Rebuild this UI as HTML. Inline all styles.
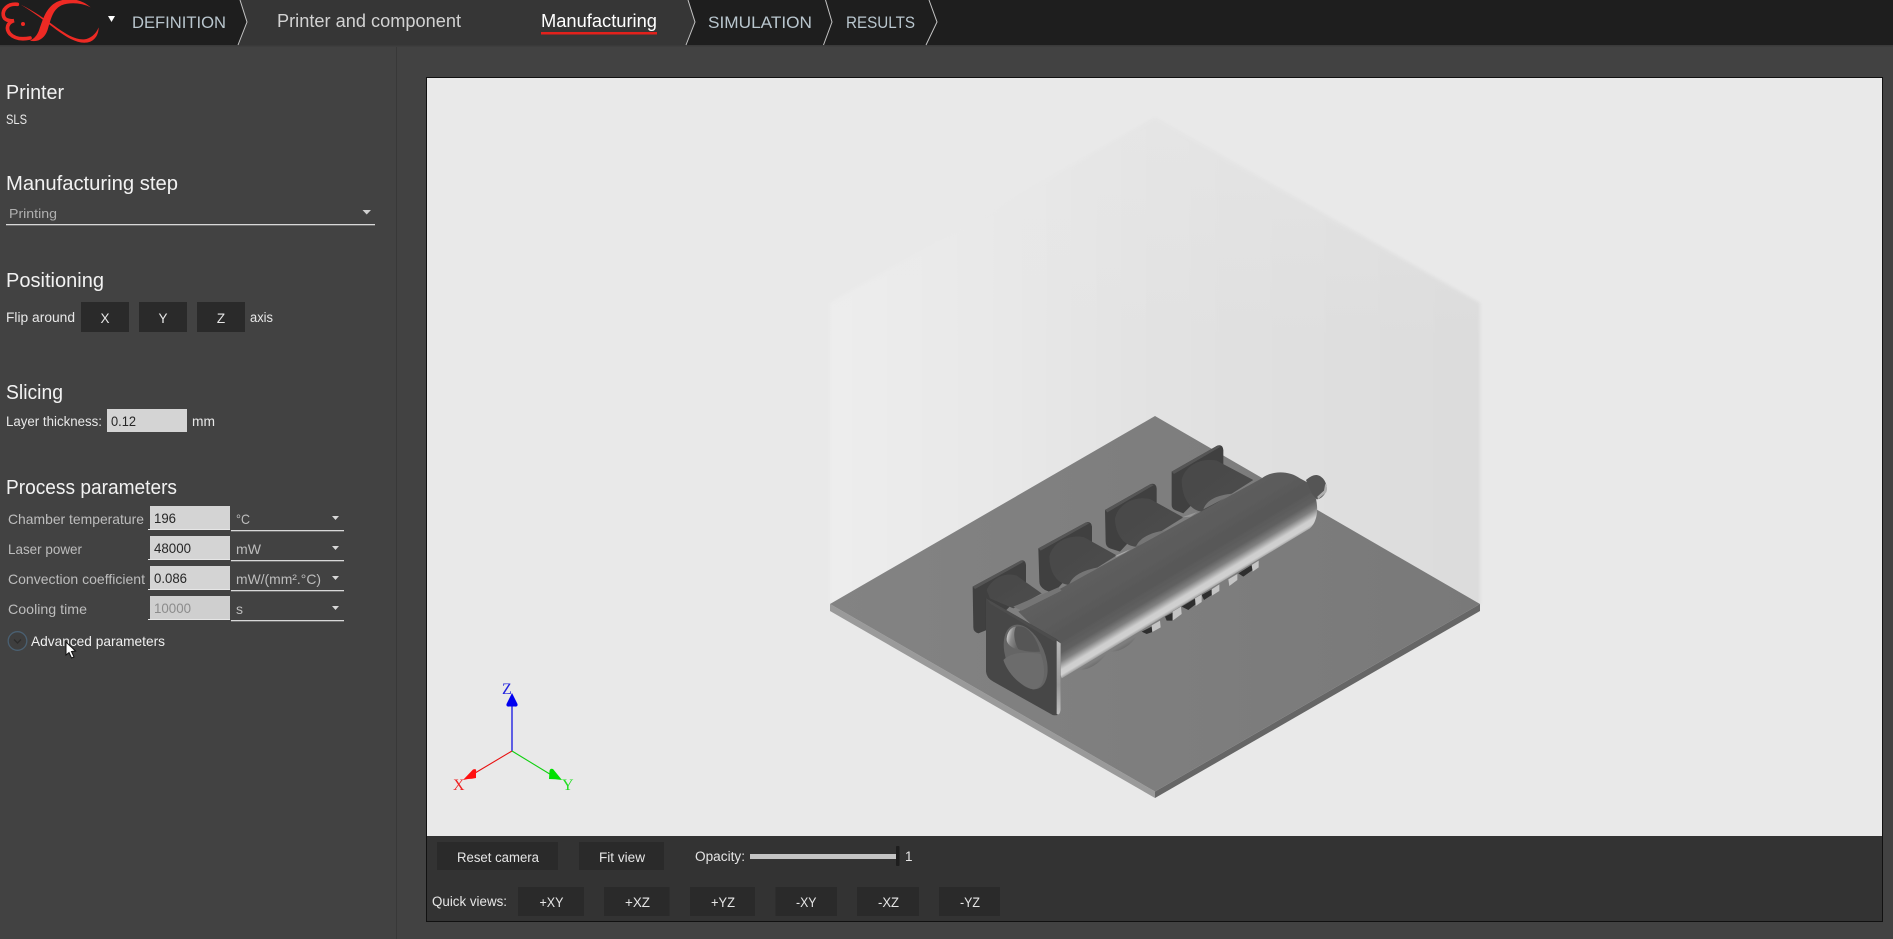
<!DOCTYPE html>
<html lang="en">
<head>
<meta charset="utf-8">
<title>Manufacturing</title>
<style>
html,body{margin:0;padding:0;background:#424242;width:1893px;height:939px;overflow:hidden}
svg{display:block}
text{font-family:"Liberation Sans",sans-serif}
.h{font-size:20px;fill:#f2f2f2}
.l{font-size:14px;fill:#bdbdbd}
.w{font-size:13.5px;fill:#e8e8e8}
.n{font-size:17px;fill:#b9c6ce}
.v{font-size:14px;fill:#262626}
.b{font-size:13.5px;fill:#e6e6e6}
.c{text-anchor:middle}
</style>
</head>
<body>
<svg width="1893" height="939" viewBox="0 0 1893 939" xmlns="http://www.w3.org/2000/svg">
<defs>
<linearGradient id="wall" gradientUnits="userSpaceOnUse" x1="830" y1="0" x2="1480" y2="0"><stop offset="0" stop-color="#ededed"/><stop offset=".27" stop-color="#e8e8e8"/><stop offset=".5" stop-color="#e2e2e2"/><stop offset=".75" stop-color="#dfdfdf"/><stop offset="1" stop-color="#dcdcdc"/></linearGradient>
<linearGradient id="fade" gradientUnits="userSpaceOnUse" x1="0" y1="118" x2="0" y2="340"><stop offset="0" stop-color="#e9e9e9" stop-opacity=".45"/><stop offset="1" stop-color="#e9e9e9" stop-opacity="0"/></linearGradient>
<linearGradient id="pt" gradientUnits="userSpaceOnUse" x1="830" y1="0" x2="1480" y2="0"><stop offset="0" stop-color="#838383"/><stop offset="1" stop-color="#797979"/></linearGradient>
<linearGradient id="tube" gradientUnits="userSpaceOnUse" x1="560" y1="351" x2="674" y2="541"><stop offset="0" stop-color="#5e5e5e"/><stop offset=".55" stop-color="#585858"/><stop offset=".7" stop-color="#606060"/><stop offset=".8" stop-color="#808080"/><stop offset=".9" stop-color="#cfcfcf"/><stop offset=".96" stop-color="#d0d0d0"/><stop offset="1" stop-color="#a0a0a0"/></linearGradient>
<linearGradient id="cyl" x1="0" y1="0" x2="1" y2="1"><stop offset="0" stop-color="#474747"/><stop offset="1" stop-color="#4e4e4e"/></linearGradient>
<linearGradient id="edge" x1="0" y1="0" x2="0" y2="1"><stop offset="0" stop-color="#b8b8b8"/><stop offset=".6" stop-color="#989898"/><stop offset="1" stop-color="#c0c0c0"/></linearGradient>
<linearGradient id="cres" x1="0" y1="0" x2="1" y2=".5"><stop offset="0" stop-color="#f0f0f0"/><stop offset=".5" stop-color="#8a8a8a"/><stop offset="1" stop-color="#666"/></linearGradient>
<linearGradient id="lump" x1="0" y1="0" x2="1" y2="1"><stop offset="0" stop-color="#bbb"/><stop offset="1" stop-color="#444"/></linearGradient>
<filter id="soft" x="-5%" y="-5%" width="110%" height="110%"><feGaussianBlur stdDeviation=".6"/></filter>
<filter id="soft2" x="-5%" y="-5%" width="110%" height="110%"><feGaussianBlur stdDeviation="1.5"/></filter>
</defs>

<!-- page -->
<rect width="1893" height="939" fill="#424242"/>
<rect x="396" y="47" width="1" height="892" fill="#383838"/>

<!-- top bar -->
<rect width="1893" height="45" fill="#1e1e1e"/>
<rect y="45" width="1893" height="1.5" fill="#3a3a3a"/>
<polygon points="240,0 688,0 695,22 686,45 238,45 247,22" fill="#363636"/>
<path d="M240,0 L247,22 L238,45 M688,0 L695,22 L686,45 M825.5,0 L832,22 L823.5,45 M929,0 L937,22 L926,45" fill="none" stroke="#c4c4c4" stroke-width="1"/>

<!-- logo -->
<g transform="scale(.3333)">
<path d="M52,13 C22,10 7,30 10,46 C12,60 28,64 42,62 C22,68 16,86 30,102 C46,118 70,118 90,114" fill="none" stroke="#ee2a24" stroke-width="11" stroke-linecap="round"/>
<circle cx="69" cy="72" r="6" fill="#ee2a24"/>
<path d="M272,22 C240,-6 200,-8 170,6 C136,24 128,62 118,88 C112,106 102,116 90,122 C116,128 134,114 142,92 C152,62 156,30 184,16 C210,6 244,8 272,22 Z" fill="#ee2a24"/>
<path d="M62,14 C100,36 135,64 170,90 C200,112 230,130 258,128 C282,126 296,106 296,82 C288,102 272,116 252,118 C226,120 198,102 172,84 C136,58 100,32 62,14 Z" fill="#ee2a24"/>
</g>
<polygon points="108,16 115,16 111.5,22" fill="#fff"/>

<!-- nav -->
<text class="n" x="132" y="28" textLength="94" lengthAdjust="spacingAndGlyphs">DEFINITION</text>
<text x="277" y="27" font-size="18" fill="#d2d2d2" textLength="184" lengthAdjust="spacingAndGlyphs">Printer and component</text>
<text x="541" y="27" font-size="18" fill="#fff" textLength="116" lengthAdjust="spacingAndGlyphs">Manufacturing</text>
<rect x="541" y="32" width="116" height="2.5" fill="#e3211c"/>
<text class="n" x="708" y="28" textLength="104" lengthAdjust="spacingAndGlyphs">SIMULATION</text>
<text class="n" x="846" y="28" textLength="69" lengthAdjust="spacingAndGlyphs">RESULTS</text>

<!-- left panel -->
<text class="h" x="6" y="99" textLength="58" lengthAdjust="spacingAndGlyphs">Printer</text>
<text class="w" x="6" y="124" textLength="21" lengthAdjust="spacingAndGlyphs">SLS</text>
<text class="h" x="6" y="190" textLength="172" lengthAdjust="spacingAndGlyphs">Manufacturing step</text>
<text x="9" y="218" font-size="13" fill="#b0b0b0" textLength="48" lengthAdjust="spacingAndGlyphs">Printing</text>
<polygon points="362.5,210 371,210 366.7,214.5" fill="#d0d0d0"/>
<rect x="6" y="224" width="369" height="1.3" fill="#d8d8d8"/>
<text class="h" x="6" y="287" textLength="98" lengthAdjust="spacingAndGlyphs">Positioning</text>
<text class="w" x="6" y="322" textLength="69" lengthAdjust="spacingAndGlyphs">Flip around</text>
<rect x="81" y="302" width="48" height="30" fill="#2a2a2a"/>
<rect x="139" y="302" width="48" height="30" fill="#2a2a2a"/>
<rect x="197" y="302" width="48" height="30" fill="#2a2a2a"/>
<text class="b c" x="105" y="323">X</text>
<text class="b c" x="163" y="323">Y</text>
<text class="b c" x="221" y="323">Z</text>
<text class="w" x="250" y="322" textLength="23" lengthAdjust="spacingAndGlyphs">axis</text>
<text class="h" x="6" y="399" textLength="57" lengthAdjust="spacingAndGlyphs">Slicing</text>
<text class="w" x="6" y="426" textLength="96" lengthAdjust="spacingAndGlyphs">Layer thickness:</text>
<rect x="107" y="409" width="80" height="23" fill="#d4d4d4"/>
<text class="v" x="111" y="426" textLength="25" lengthAdjust="spacingAndGlyphs">0.12</text>
<text class="w" x="192" y="426" textLength="23" lengthAdjust="spacingAndGlyphs">mm</text>

<text class="h" x="6" y="494" textLength="171" lengthAdjust="spacingAndGlyphs">Process parameters</text>

<text class="l" x="8" y="524" textLength="136" lengthAdjust="spacingAndGlyphs">Chamber temperature</text>
<rect x="150" y="506" width="80" height="23" fill="#d4d4d4"/><rect x="148" y="529" width="82" height="1" fill="#e6e6e6"/>
<text class="v" x="154" y="523" textLength="22" lengthAdjust="spacingAndGlyphs">196</text>
<text class="l" x="236" y="524" textLength="14" lengthAdjust="spacingAndGlyphs">°C</text>
<polygon points="332,516 339,516 335.5,520" fill="#d8d8d8"/>
<rect x="231" y="530" width="113" height="1.3" fill="#d8d8d8"/>

<text class="l" x="8" y="554" textLength="74" lengthAdjust="spacingAndGlyphs">Laser power</text>
<rect x="150" y="536" width="80" height="23" fill="#d4d4d4"/><rect x="148" y="559" width="82" height="1" fill="#e6e6e6"/>
<text class="v" x="154" y="553" textLength="37" lengthAdjust="spacingAndGlyphs">48000</text>
<text class="l" x="236" y="554" textLength="25" lengthAdjust="spacingAndGlyphs">mW</text>
<polygon points="332,546 339,546 335.5,550" fill="#d8d8d8"/>
<rect x="231" y="560" width="113" height="1.3" fill="#d8d8d8"/>

<text class="l" x="8" y="584" textLength="137" lengthAdjust="spacingAndGlyphs">Convection coefficient</text>
<rect x="150" y="566" width="80" height="23" fill="#d4d4d4"/><rect x="148" y="589" width="82" height="1" fill="#e6e6e6"/>
<text class="v" x="154" y="583" textLength="33" lengthAdjust="spacingAndGlyphs">0.086</text>
<text class="l" x="236" y="584" textLength="85" lengthAdjust="spacingAndGlyphs">mW/(mm².°C)</text>
<polygon points="332,576 339,576 335.5,580" fill="#d8d8d8"/>
<rect x="231" y="590" width="113" height="1.3" fill="#d8d8d8"/>

<text class="l" x="8" y="614" textLength="79" lengthAdjust="spacingAndGlyphs">Cooling time</text>
<rect x="150" y="596" width="80" height="23" fill="#cfcfcf"/><rect x="148" y="619" width="82" height="1" fill="#e6e6e6"/>
<text x="154" y="613" font-size="14" fill="#8c8c8c" textLength="37" lengthAdjust="spacingAndGlyphs">10000</text>
<text class="l" x="236" y="614" textLength="7" lengthAdjust="spacingAndGlyphs">s</text>
<polygon points="332,606 339,606 335.5,610" fill="#d8d8d8"/>
<rect x="231" y="620" width="113" height="1.3" fill="#d8d8d8"/>

<circle cx="17.5" cy="641" r="9.3" fill="#3e3e3e" stroke="#4a6072" stroke-width="1.3"/>
<path d="M14,639.5 L17.5,643 L21,639.5" fill="none" stroke="#2c2c2c" stroke-width="1.4"/>
<text x="31" y="646" font-size="14" fill="#f0f0f0" textLength="134" lengthAdjust="spacingAndGlyphs">Advanced parameters</text>
<path d="M66,642 L66,655 L69,652.5 L71.5,658 L74,657 L71.5,651.5 L75.5,651 Z" fill="#fff" stroke="#111" stroke-width="1"/>

<!-- viewport -->
<rect x="426.5" y="77.5" width="1456" height="844" fill="#333" stroke="#111" stroke-width="1"/>
<rect x="427" y="78" width="1455" height="758" fill="#e9e9e9"/>

<!-- build volume -->
<polygon points="830,303 1155,118 1480,303 1480,604 1155,791 830,604" fill="url(#wall)" filter="url(#soft2)"/>
<polygon points="830,303 1155,118 1480,303 1480,340 830,340" fill="url(#fade)"/>

<!-- plate -->
<polygon points="830,604 830,611 1155,798 1155,791.5" fill="#9a9a9a"/>
<polygon points="1155,791.5 1155,798 1480,611 1480,604" fill="#666"/>
<polygon points="1155,416 830,604 1155,791.5 1480,604" fill="url(#pt)"/>

<!-- model, in 3x coordinates -->
<g transform="translate(950 430) scale(.33333)" filter="url(#soft)">
<!-- rear flanges -->
<path d="M665,125 L802,47 Q818,42 820,60 L820,130 L700,250 L675,240 Q665,235 665,225 Z" fill="#3f3f3f"/>
<path d="M665,125 L802,47 L812,50 L672,132 Z" fill="#555"/>
<path d="M465,240 L602,162 Q618,158 620,175 L620,245 L510,365 L480,355 Q467,350 467,335 Z" fill="#3f3f3f"/>
<path d="M465,240 L602,162 L612,165 L472,247 Z" fill="#555"/>
<path d="M265,355 L408,277 Q424,273 426,290 L426,360 L310,490 L285,480 Q268,470 268,455 Z" fill="#3f3f3f"/>
<path d="M265,355 L408,277 L418,280 L272,362 Z" fill="#555"/>
<path d="M68,470 L212,392 Q226,388 228,405 L228,480 L110,600 L85,610 Q70,606 70,592 Z" fill="#3f3f3f"/>
<path d="M68,470 L212,392 L222,395 L75,477 Z" fill="#555"/>

<!-- cylinders -->
<path d="M695,150 C705,105 755,82 800,92 L910,150 L760,245 C720,245 695,200 695,150 Z" fill="url(#cyl)"/>
<path d="M495,265 C505,220 555,197 600,207 L700,262 L560,350 C525,350 495,315 495,265 Z" fill="url(#cyl)"/>
<path d="M298,380 C308,335 358,312 403,322 L500,376 L360,465 C325,465 298,430 298,380 Z" fill="url(#cyl)"/>
<path d="M110,480 C125,445 165,425 200,437 L275,490 L190,535 L120,505 Z" fill="url(#cyl)"/>

<!-- main tube -->
<path d="M205,545 L935,145 C965,122 1015,120 1050,145 L1078,160 C1108,205 1110,268 1080,295 L335,745 L300,640 Z" fill="url(#tube)"/>

<!-- saddles -->
<path d="M760,238 C770,210 800,195 850,191 Z" fill="#757575"/>
<path d="M558,350 C568,325 600,306 650,301 Z" fill="#757575"/>
<path d="M358,462 C368,437 398,420 450,411 Z" fill="#757575"/>
<path d="M190,530 L325,472 L335,482 L215,542 Z" fill="#757575"/>
<path d="M495,378 L540,358 L525,368 L500,380 Z" fill="#aaa"/>
<path d="M695,262 L742,246 L722,260 Z" fill="#999"/>

<!-- nozzle -->
<path d="M1068,150 C1075,145 1085,135 1100,135 C1120,138 1132,160 1130,180 C1125,195 1112,208 1100,208 L1085,190 Z" fill="#555"/>
<path d="M1126,160 C1132,170 1132,182 1128,188 L1104,208 L1102,200 L1122,182 Z" fill="#b0b0b0"/>

<!-- underside details -->
<path d="M385,718 C410,725 450,700 470,670 L440,690 Z" fill="url(#lump)"/>
<path d="M478,665 C510,668 545,645 562,615 L530,635 Z" fill="url(#lump)"/>
<g fill="#2e2e2e">
<polygon points="575,605 605,590 607,606 590,612"/>
<polygon points="645,560 668,548 668,572 650,572"/>
<polygon points="695,530 736,505 738,522 715,540"/>
<polygon points="755,495 785,478 785,495 762,510"/>
<polygon points="865,430 905,405 908,420 880,440"/>
</g>
<g fill="#c4c4c4">
<polygon points="605,586 630,572 632,592 607,606"/>
<polygon points="668,545 693,530 695,552 668,572"/>
<polygon points="735,505 755,493 755,516 737,528"/>
<polygon points="785,478 808,463 808,483 786,497"/>
<polygon points="835,448 862,432 862,450 838,468"/>
<polygon points="905,405 926,392 926,412 908,425"/>
</g>

<!-- front flange -->
<path d="M108,505 L318,626 Q332,634 332,650 L332,838 Q330,860 308,855 L130,755 Q110,745 108,725 Z" fill="#464646"/>
<path d="M108,505 L320,628 L312,634 L122,522 Z" fill="#4e4e4e"/>
<path d="M320,632 L332,640 L332,838 Q330,858 320,852 Z" fill="url(#edge)"/>

<!-- hole -->
<ellipse cx="227" cy="681" rx="58" ry="102" transform="rotate(-22 227 681)" fill="#656565"/>
<path d="M170,625 C172,600 195,585 215,590 C240,595 262,630 270,665 C240,668 205,662 180,645 Q170,638 170,625 Z" fill="#565656"/>
<path d="M170,625 C172,605 185,590 198,590 C190,605 190,630 206,660 C190,655 168,645 170,625 Z" fill="url(#cres)"/>
<path d="M160,690 C190,660 250,668 272,672 C290,720 285,775 250,778 C215,770 175,735 160,690 Z" fill="#6c6c6c"/>
</g>

<!-- axes -->
<line x1="512" y1="751" x2="512" y2="706" stroke="#0000e0" stroke-width="1.2"/>
<path d="M512,693 L517.5,704 Q518,707 515,706.5 L509,706.5 Q506,707 506.5,704 Z" fill="#0000f0"/>
<line x1="512" y1="751" x2="470" y2="776" stroke="#e81010" stroke-width="1.1"/>
<path d="M463,780 L473,769.5 Q477,768 476,772 L476,778 Q472,779 468,779 Z" fill="#ff1010"/>
<line x1="512" y1="751" x2="553" y2="776" stroke="#10d010" stroke-width="1.1"/>
<path d="M562,780 L553,769 Q550,768 549.5,771 L549,779 Q555,779 562,780 Z" fill="#00e000"/>
<text x="502" y="694" font-size="16" fill="#2222dd" style="font-family:'Liberation Serif',serif">Z</text>
<text x="453" y="790" font-size="16" fill="#ee2222" style="font-family:'Liberation Serif',serif">X</text>
<text x="562" y="790" font-size="16" fill="#22dd22" style="font-family:'Liberation Serif',serif">Y</text>

<!-- toolbar -->
<rect x="437" y="842" width="121" height="28" fill="#2a2a2a"/>
<text class="b" x="457" y="862" textLength="82" lengthAdjust="spacingAndGlyphs">Reset camera</text>
<rect x="579" y="842" width="85" height="28" fill="#2a2a2a"/>
<text class="b" x="599" y="862" textLength="46" lengthAdjust="spacingAndGlyphs">Fit view</text>
<text class="b" x="695" y="861" textLength="50" lengthAdjust="spacingAndGlyphs">Opacity:</text>
<rect x="750" y="854" width="147" height="5" fill="#c4c4c4"/>
<rect x="896" y="846" width="3.5" height="20" rx="1" fill="#1e1e1e"/>
<text class="b" x="905" y="861">1</text>

<text class="b" x="432" y="906" textLength="75" lengthAdjust="spacingAndGlyphs">Quick views:</text>
<rect x="518" y="887" width="66" height="29" fill="#2a2a2a"/>
<rect x="604" y="887" width="65.5" height="29" fill="#2a2a2a"/>
<rect x="690" y="887" width="65" height="29" fill="#2a2a2a"/>
<rect x="775.5" y="887" width="61.5" height="29" fill="#2a2a2a"/>
<rect x="857" y="887" width="62" height="29" fill="#2a2a2a"/>
<rect x="939" y="887" width="61" height="29" fill="#2a2a2a"/>
<text class="b" x="539.5" y="907" textLength="24" lengthAdjust="spacingAndGlyphs">+XY</text>
<text class="b" x="625" y="907" textLength="25" lengthAdjust="spacingAndGlyphs">+XZ</text>
<text class="b" x="711" y="907" textLength="24" lengthAdjust="spacingAndGlyphs">+YZ</text>
<text class="b" x="796" y="907" textLength="20.5" lengthAdjust="spacingAndGlyphs">-XY</text>
<text class="b" x="878" y="907" textLength="21" lengthAdjust="spacingAndGlyphs">-XZ</text>
<text class="b" x="960" y="907" textLength="20" lengthAdjust="spacingAndGlyphs">-YZ</text>
</svg>
</body>
</html>
